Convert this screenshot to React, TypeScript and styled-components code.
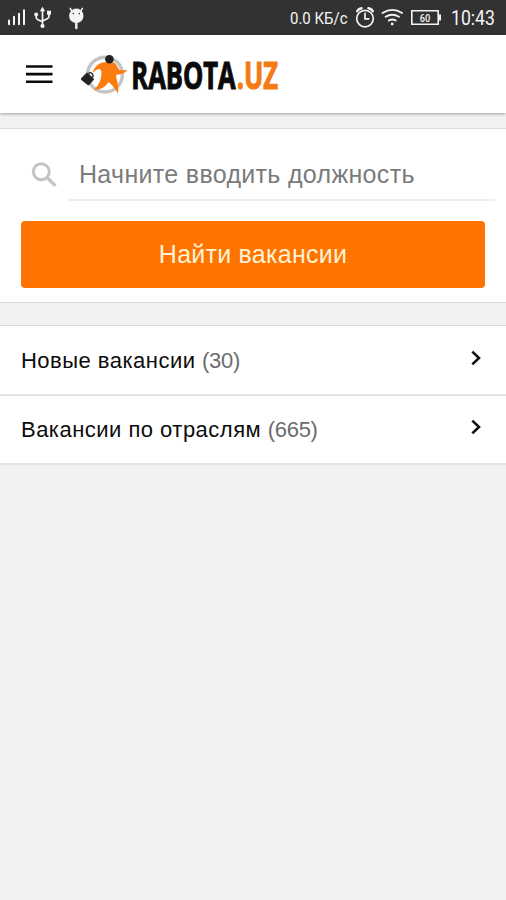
import React from "react";
import styled, { createGlobalStyle } from "styled-components";

const GlobalStyle = createGlobalStyle`
  * { box-sizing: border-box; }
  body { margin: 0; background: #f2f2f2; }
  svg { display: block; flex: none; overflow: visible; }
`;

const Screen = styled.div`
  width: 100%;
  height: 900px;
  background: #f2f2f2;
  font-family: "Liberation Sans", Arial, sans-serif;
  display: flex;
  flex-direction: column;
`;

const StatusBar = styled.div`
  height: 35px;
  flex: none;
  background: #323232;
  color: #f4f4f4;
  display: flex;
  align-items: center;
  font-family: Roboto, sans-serif;
`;

const Spacer = styled.div`
  flex: 1;
`;

const NetSpeed = styled.span`
  font-size: 17px;
  line-height: 35px;
  width: 57px;
  margin-right: 8px;
  padding-top: 2px;
  white-space: nowrap;
  transform: scaleX(0.88);
  transform-origin: 0 50%;
`;

const Clock = styled.span`
  font-size: 20px;
  line-height: 35px;
  width: 44px;
  margin: 2px 11px 0 10px;
  white-space: nowrap;
  transform: scaleX(0.88);
  transform-origin: 0 50%;
`;

const Header = styled.header`
  height: 78px;
  flex: none;
  background: #fff;
  display: flex;
  align-items: center;
  padding-left: 26px;
  box-shadow: 0 1px 3px rgba(0, 0, 0, 0.35);
`;

const MenuButton = styled.button`
  border: 0;
  padding: 0;
  margin: 0 27px 0 0;
  background: none;
`;

const SearchPanel = styled.section`
  flex: none;
  height: 175px;
  margin-top: 15px;
  background: #fff;
  border-top: 1px solid #dcdcdc;
  border-bottom: 1px solid #d9d9d9;
  padding: 19px 11px 0 21px;
`;

const SearchRow = styled.div`
  display: flex;
  height: 53px;
  padding-left: 11px;
  gap: 11px;
`;

const Field = styled.input`
  flex: 1;
  min-width: 0;
  height: 53px;
  border: 0;
  border-bottom: 2px solid #eeeeee;
  outline: 0;
  background: none;
  padding: 2px 0 0 11px;
  font: 25px "Liberation Sans", Arial, sans-serif;
  letter-spacing: 0.32px;
  &::placeholder {
    color: #7b7b7b;
    opacity: 1;
  }
`;

const SubmitButton = styled.button`
  display: block;
  width: 464px;
  height: 67px;
  margin-top: 20px;
  border: 0;
  border-radius: 4px;
  background: #ff7300;
  color: #fff3d6;
  font: 25px "Liberation Sans", Arial, sans-serif;
  letter-spacing: 0.25px;
  padding: 0 0 1px;
`;

const List = styled.nav`
  flex: none;
  margin-top: 22px;
  border-top: 1px solid #d9d9d9;
`;

const ListItem = styled.a`
  display: flex;
  align-items: center;
  justify-content: space-between;
  height: 69.5px;
  background: #fff;
  border-bottom: 2px solid #e4e4e4;
  padding: 2px 24px 0 21px;
  color: #0c0c0c;
  font-size: 22px;
  white-space: pre;
`;

const Label = styled.span`
  letter-spacing: 0.48px;
`;

const Count = styled.span`
  color: #6c6c6c;
  letter-spacing: -0.3px;
`;

const Chevron = styled.svg`
  margin-top: -6px;
`;

const StatusIcons = () => (
  <svg width="92" height="35" viewBox="0 0 92 35" fill="none" stroke="#f4f4f4" strokeLinecap="round">
    <path d="M9 20.5V24.3M14 16.8V24.3M19 13.8V24.3M24 10.2V24.3" strokeWidth="2" />
    <path d="M42.5 10V25M36.2 15v2.2q0 1.8 1.8 2.6l4.5 2M49 14v2q0 2-1.8 2.8l-4.7 2.2" strokeWidth="1.7" />
    <g fill="#f4f4f4" stroke="none">
      <path d="M42.5 6.8l2.7 4.4h-5.4z" />
      <circle cx="42.5" cy="26" r="2.1" />
      <circle cx="36.2" cy="14.6" r="2" />
      <path d="M47 10.7h4v4h-4z" />
      <circle cx="76.3" cy="15.8" r="7.2" />
    </g>
    <path d="M71.5 10.5l-1.3-2.2M81 10.5l1.4-2.2" strokeWidth="1.5" />
    <path d="M76.3 23V28" strokeWidth="2.4" />
    <circle cx="73.3" cy="13.6" r="0.8" fill="#323232" stroke="none" />
    <circle cx="79.3" cy="13.6" r="0.8" fill="#323232" stroke="none" />
  </svg>
);

const AlarmIcon = () => (
  <svg width="20" height="35" viewBox="355 0 20 35" fill="none" stroke="#f4f4f4" strokeLinecap="round">
    <circle cx="365" cy="18.6" r="8.3" strokeWidth="1.7" />
    <path d="M365 13.4V18.9H368.8" strokeWidth="1.7" />
    <path d="M357.2 11.2q1.3-2.6 4.4-3M372.8 11.2q-1.3-2.6-4.4-3" strokeWidth="2.4" />
  </svg>
);

const WifiIcon = () => (
  <svg width="36" height="35" viewBox="375 0 36 35" fill="none" stroke="#f4f4f4" strokeLinecap="round" strokeWidth="1.9">
    <path d="M382.5 13q9.8-6.3 19.6 0M385.6 16.8q6.7-4.2 13.4 0M388.8 20.5q3.5-2.1 7 0" />
    <circle cx="392.2" cy="24" r="1.4" fill="#f4f4f4" stroke="none" />
  </svg>
);

const BatteryIcon = () => (
  <svg width="30" height="35" viewBox="411 0 30 35">
    <path d="M411.8 10.8h26.4v13.5h-26.4z" fill="none" stroke="#f4f4f4" strokeWidth="1.6" />
    <path d="M439 14.4h2v6h-2z" fill="#f4f4f4" />
    <text x="425" y="21.6" textAnchor="middle" fontFamily="Roboto, sans-serif" fontWeight="500" fontSize="11" textLength="10.5" lengthAdjust="spacingAndGlyphs" fill="#f4f4f4">60</text>
  </svg>
);

const Logo = () => (
  <svg width="200" height="45" viewBox="80 52 200 45">
    <circle cx="105" cy="74.6" r="17.4" fill="none" stroke="#c3c3c3" strokeWidth="3.4" />
    <path
      transform="translate(0 30.3) scale(.3333)"
      d="M279 124C286 107 298 97 314 96H340C350 100 352 114 361 120L381 119C375 129 361 133 349 133C347 146 358 160 354 190C345 176 337 162 325 156C316 170 301 180 282 178C296 166 303 149 304 134C305 124 304 119 300 116C293 115 286 119 279 127Z"
      fill="#fb7c0d"
    />
    <circle cx="109.4" cy="59.2" r="4.3" fill="#222" />
    <path
      d="M81.6 78.2L86.2 73.4Q87 72.7 87.9 73.4L93.2 78.5Q93.9 79.3 93.2 80.1L89.2 84.6Q88.4 85.3 87.6 84.6L81.8 80Q80.8 79.1 81.6 78.2Z"
      fill="#222"
      stroke="#222"
      strokeWidth="0.8"
    />
    <path d="M88.4 73.6q1.7-1.8 3.5-.2t.8 4.2" fill="none" stroke="#222" strokeWidth="1.3" />
    <g transform="translate(131.3 89.4) scale(.672 1)" fontFamily="Open Sans, sans-serif" fontWeight="700" fontSize="38" strokeWidth="1.1">
      <text x="0" y="0" fill="#0a0a0a" stroke="#0a0a0a">RABOTA</text>
      <text x="157" y="0" fill="#f47a14" stroke="#f47a14">.UZ</text>
    </g>
  </svg>
);

const ArrowIcon = () => (
  <Chevron width="12" height="16" viewBox="0 0 12 16" fill="none" stroke="#111" strokeWidth="2.6">
    <path d="M2.3 1.6L9 8L2.3 14.4" />
  </Chevron>
);

const links = [
  { label: "Новые вакансии", count: 30 },
  { label: "Вакансии по отраслям", count: 665 },
];

export default function App() {
  return (
    <>
      <GlobalStyle />
      <Screen>
        <StatusBar>
          <StatusIcons />
          <Spacer />
          <NetSpeed>0.0 КБ/с</NetSpeed>
          <AlarmIcon />
          <WifiIcon />
          <BatteryIcon />
          <Clock>10:43</Clock>
        </StatusBar>
        <Header>
          <MenuButton aria-label="Меню">
            <svg width="27" height="20" viewBox="0 0 27 20" fill="#0a0a0a">
              <path d="M0 1.2h26.5v2.6H0zM0 8.8h26.5v2.6H0zM0 16.4h26.5v2.6H0z" />
            </svg>
          </MenuButton>
          <Logo />
        </Header>
        <SearchPanel>
          <SearchRow>
            <svg width="25" height="53" viewBox="32 147.5 25 53" fill="none" stroke="#c4c4c4">
              <circle cx="41.3" cy="171.2" r="8" strokeWidth="2.9" />
              <path d="M47.3 177.2L55.5 185.4" strokeWidth="3.4" />
            </svg>
            <Field placeholder="Начните вводить должность" />
          </SearchRow>
          <SubmitButton>Найти вакансии</SubmitButton>
        </SearchPanel>
        <List>
          {links.map((l) => (
            <ListItem key={l.label}>
              <Label>
                {l.label} <Count>({l.count})</Count>
              </Label>
              <ArrowIcon />
            </ListItem>
          ))}
        </List>
      </Screen>
    </>
  );
}
